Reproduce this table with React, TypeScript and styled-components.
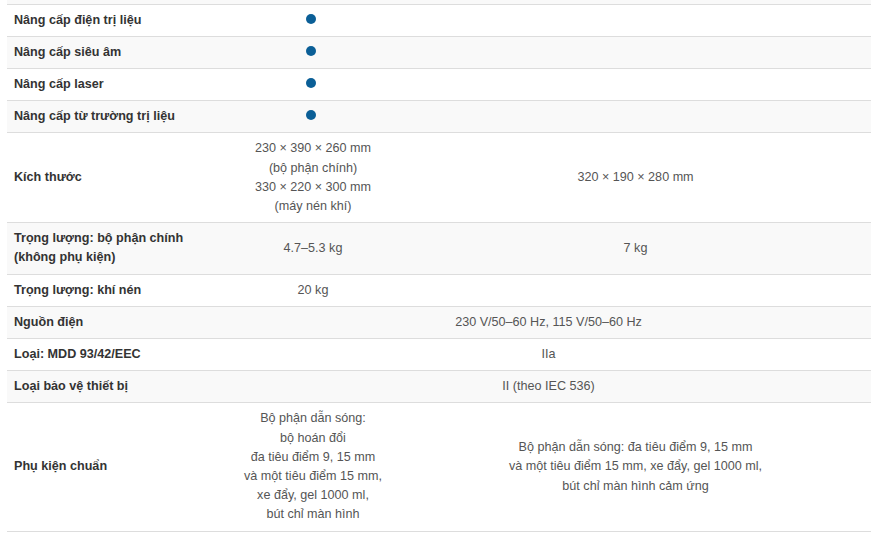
import React from "react";
import styled, { createGlobalStyle } from "styled-components";

// --- Global ---
const GlobalStyle = createGlobalStyle`
  html, body {
    margin: 0;
    padding: 0;
    background: #fff;
  }
  body {
    font-family: "Liberation Sans", Arial, sans-serif;
  }
`;

// --- Styles ---
const Wrapper = styled.div`
  padding: 0 12px 0 7px;
`;

const SpecTable = styled.table`
  width: 864px;
  border-collapse: collapse;
  table-layout: fixed;
  font-size: 12.6px;
  line-height: 19.2px;
`;

const Row = styled.tr<{ $striped?: boolean }>`
  background-color: ${(p) => (p.$striped ? "#f9f9f9" : "#fff")};
  border-bottom: 1px solid #ddd;
`;

const TailRow = styled.tr`
  height: 4px;
  background-color: #f9f9f9;
  border-bottom: 1px solid #ddd;
`;

const LabelCell = styled.th`
  text-align: left;
  font-weight: 700;
  color: #333;
  padding: 6px 7px;
  vertical-align: middle;
`;

const ValueCell = styled.td`
  text-align: center;
  color: #555;
  padding: 6px 7px;
  vertical-align: middle;
`;

const Dot = styled.span`
  display: inline-block;
  width: 10px;
  height: 10px;
  border-radius: 50%;
  background-color: #0b5f97;
  margin-right: 4px;
  vertical-align: 0px;
`;

// --- Data ---
interface Spec {
  label: React.ReactNode;
  values: { content: React.ReactNode; span?: number }[];
}

const specs: Spec[] = [
  { label: "Nâng cấp điện trị liệu", values: [{ content: <Dot /> }, { content: "" }] },
  { label: "Nâng cấp siêu âm", values: [{ content: <Dot /> }, { content: "" }] },
  { label: "Nâng cấp laser", values: [{ content: <Dot /> }, { content: "" }] },
  { label: "Nâng cấp từ trường trị liệu", values: [{ content: <Dot /> }, { content: "" }] },
  {
    label: "Kích thước",
    values: [
      {
        content: (
          <>
            230 × 390 × 260 mm
            <br />
            (bộ phận chính)
            <br />
            330 × 220 × 300 mm
            <br />
            (máy nén khí)
          </>
        ),
      },
      { content: "320 × 190 × 280 mm" },
    ],
  },
  {
    label: (
      <>
        Trọng lượng: bộ phận chính
        <br />
        (không phụ kiện)
      </>
    ),
    values: [{ content: "4.7–5.3 kg" }, { content: "7 kg" }],
  },
  { label: "Trọng lượng: khí nén", values: [{ content: "20 kg" }, { content: "" }] },
  {
    label: "Nguồn điện",
    values: [{ content: "230 V/50–60 Hz, 115 V/50–60 Hz", span: 2 }],
  },
  { label: "Loại: MDD 93/42/EEC", values: [{ content: "IIa", span: 2 }] },
  { label: "Loại bảo vệ thiết bị", values: [{ content: "II (theo IEC 536)", span: 2 }] },
  {
    label: "Phụ kiện chuẩn",
    values: [
      {
        content: (
          <>
            Bộ phận dẫn sóng:
            <br />
            bộ hoán đổi
            <br />
            đa tiêu điểm 9, 15 mm
            <br />
            và một tiêu điểm 15 mm,
            <br />
            xe đẩy, gel 1000 ml,
            <br />
            bút chỉ màn hình
          </>
        ),
      },
      {
        content: (
          <>
            Bộ phận dẫn sóng: đa tiêu điểm 9, 15 mm
            <br />
            và một tiêu điểm 15 mm, xe đẩy, gel 1000 ml,
            <br />
            bút chỉ màn hình cảm ứng
          </>
        ),
      },
    ],
  },
];

// --- Page ---
function App() {
  return (
    <>
      <GlobalStyle />
      <Wrapper>
        <SpecTable>
          <colgroup>
            <col style={{ width: 219 }} />
            <col style={{ width: 174 }} />
            <col style={{ width: 471 }} />
          </colgroup>
          <tbody>
            <TailRow>
              <td colSpan={3} />
            </TailRow>
            {specs.map((spec, i) => (
              <Row key={i} $striped={i % 2 === 1}>
                <LabelCell>{spec.label}</LabelCell>
                {spec.values.map((v, j) => (
                  <ValueCell key={j} colSpan={v.span ?? 1}>
                    {v.content}
                  </ValueCell>
                ))}
              </Row>
            ))}
          </tbody>
        </SpecTable>
      </Wrapper>
    </>
  );
}

export default App;
